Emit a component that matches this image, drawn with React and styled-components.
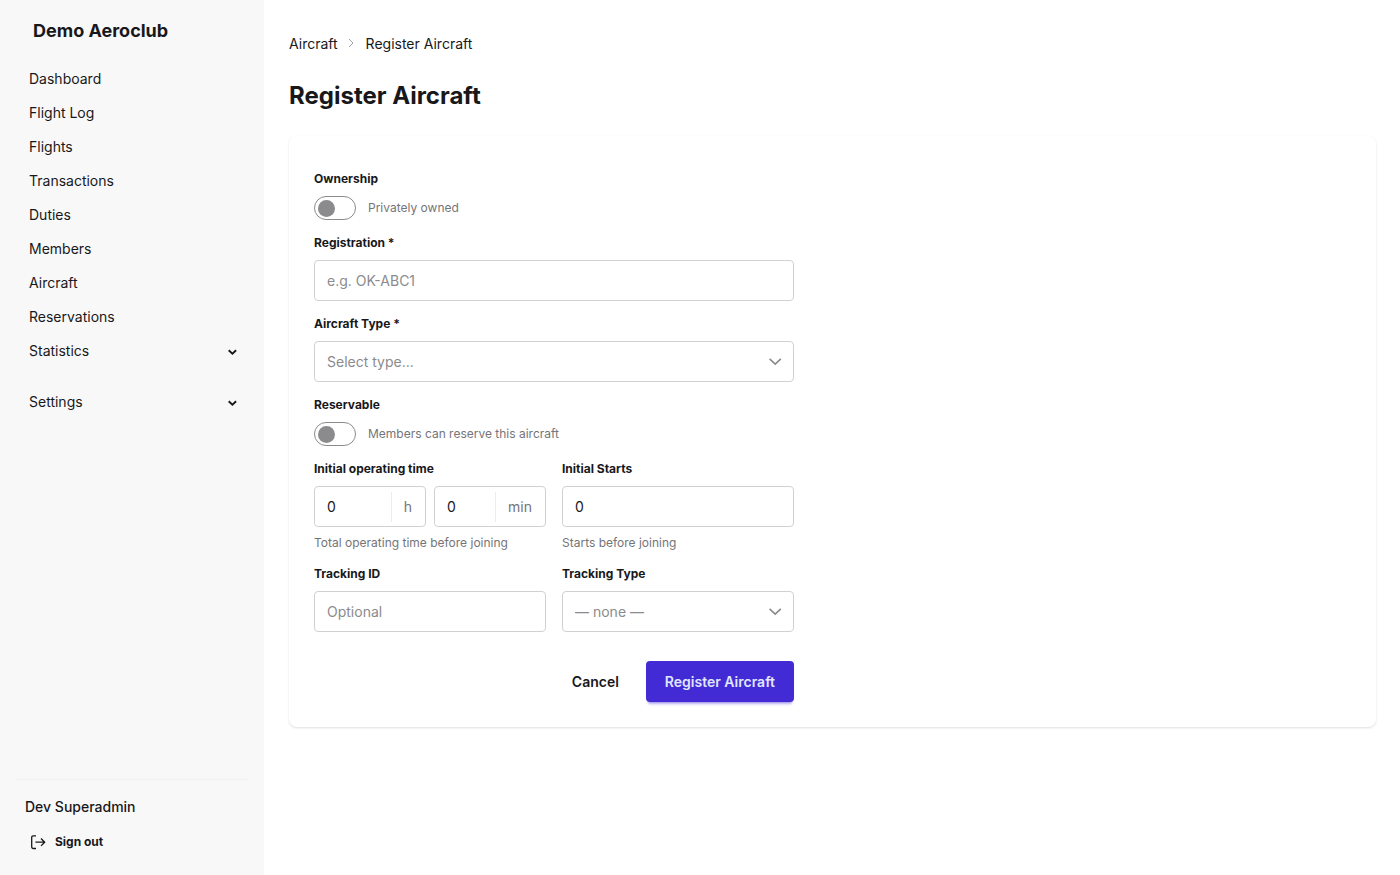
import React, { useState } from "react";
import styled, { createGlobalStyle } from "styled-components";

const GlobalStyle = createGlobalStyle`
  * {
    box-sizing: border-box;
  }

  body {
    margin: 0;
    background: #ffffff;
    color: #18181b;
    font-family: Inter, "Liberation Sans", sans-serif;
    font-size: 14px;
    line-height: 20px;
  }

  button, input, select {
    font: inherit;
    color: inherit;
  }
`;

const Page = styled.div`
  display: flex;
  min-height: 100vh;
`;

const Sidebar = styled.aside`
  display: flex;
  flex-direction: column;
  flex: none;
  width: 264px;
  padding: 17px 16px;
  background: #f8f8f8;
`;

const ClubName = styled.a`
  padding: 0 17px;
  color: inherit;
  font-size: 18px;
  font-weight: 700;
  line-height: 28px;
  text-decoration: none;
`;

const Nav = styled.nav`
  display: flex;
  flex-direction: column;
  flex: 1;
  margin-top: 17px;
`;

const NavLink = styled.a`
  padding: 7px 13px;
  color: inherit;
  text-decoration: none;
`;

const NavGroup = styled.button`
  display: flex;
  align-items: center;
  justify-content: space-between;
  margin-bottom: 17px;
  padding: 7px 10px 7px 13px;
  border: 0;
  background: none;
  text-align: left;
  cursor: pointer;
`;

const UserBox = styled.div`
  display: flex;
  flex-direction: column;
  align-items: flex-start;
  gap: 9px;
  padding: 17px 9px 0;
  border-top: 1px solid #f0f0f0;
`;

const UserName = styled.div`
  font-weight: 500;
`;

const SignOut = styled.button`
  display: flex;
  align-items: center;
  gap: 8px;
  padding: 6px 5px;
  border: 0;
  background: none;
  font-size: 12px;
  font-weight: 700;
  cursor: pointer;
`;

const Main = styled.main`
  flex: 1;
  min-width: 0;
  padding: 34px 24px 24px 25px;
`;

const Breadcrumbs = styled.nav`
  display: flex;
  align-items: center;
  gap: 8px;
`;

const Crumb = styled.a`
  color: inherit;
  text-decoration: none;
`;

const Title = styled.h1`
  margin: 26px 0 24px;
  font-size: 24px;
  font-weight: 700;
  line-height: 32px;
`;

const Card = styled.section`
  padding: 34px 25px 25px;
  border-radius: 8px;
  background: #ffffff;
  box-shadow: 0 1px 3px rgba(0, 0, 0, 0.08), 0 1px 2px rgba(0, 0, 0, 0.06);
`;

const Form = styled.form`
  display: flex;
  flex-direction: column;
  gap: 14px;
  max-width: 480px;
`;

const Columns = styled.div`
  display: grid;
  grid-template-columns: 1fr 1fr;
  gap: 16px;
`;

const FieldBox = styled.div`
  display: flex;
  flex-direction: column;
  gap: 8px;
  min-width: 0;
`;

const Label = styled.label`
  font-size: 12px;
  font-weight: 700;
  line-height: 18px;
`;

const Hint = styled.p`
  margin: 0;
  color: #757578;
  font-size: 12px;
  line-height: 16px;
`;

const ToggleRow = styled.div`
  display: flex;
  align-items: center;
  gap: 12px;
`;

const Toggle = styled.input`
  appearance: none;
  display: flex;
  align-items: center;
  width: 42px;
  height: 24px;
  margin: 0;
  padding: 0 3px;
  border: 1px solid #8b8b8d;
  border-radius: 12px;
  cursor: pointer;

  &::before {
    content: "";
    width: 17px;
    height: 17px;
    border-radius: 50%;
    background: #8b8b8d;
  }

  &:checked {
    justify-content: flex-end;
  }
`;

const TextInput = styled.input`
  width: 100%;
  height: 41px;
  padding: 0 12px;
  border: 1px solid #d1d1d1;
  border-radius: 4px;
  background: #ffffff;

  &::placeholder {
    color: #8b8b8d;
    opacity: 1;
  }
`;

const SelectBox = styled.div`
  display: grid;
  align-items: center;

  > * {
    grid-area: 1 / 1;
  }

  > svg {
    justify-self: end;
    margin-right: 12px;
    pointer-events: none;
  }
`;

const Select = styled.select`
  appearance: none;
  width: 100%;
  height: 41px;
  padding: 0 32px 0 12px;
  border: 1px solid #d1d1d1;
  border-radius: 4px;
  background: #ffffff;
  color: #8b8b8d;
`;

const TimeRow = styled.div`
  display: grid;
  grid-template-columns: 1fr 1fr;
  gap: 8px;
`;

const UnitBox = styled.div`
  display: flex;
  align-items: center;
  height: 41px;
  border: 1px solid #d1d1d1;
  border-radius: 4px;
`;

const UnitInput = styled.input`
  flex: 1;
  width: 0;
  padding: 0 0 0 12px;
  border: 0;
  background: none;
`;

const Unit = styled.span`
  padding: 5px 13px 5px 12px;
  border-left: 1px solid #ececec;
  color: #757578;
`;

const Actions = styled.div`
  display: flex;
  justify-content: flex-end;
  gap: 8px;
  margin-top: 15px;
`;

const Button = styled.button`
  height: 41px;
  padding: 0 19px;
  border: 0;
  border-radius: 4px;
  background: ${({ $primary }) => ($primary ? "#422ad5" : "transparent")};
  color: ${({ $primary }) => ($primary ? "#e0e7ff" : "inherit")};
  box-shadow: ${({ $primary }) =>
    $primary ? "0 3px 2px -2px rgba(66, 42, 213, 0.3), 0 4px 3px -2px rgba(66, 42, 213, 0.3)" : "none"};
  font-weight: 600;
  cursor: pointer;
`;

const links = [
  "Dashboard",
  "Flight Log",
  "Flights",
  "Transactions",
  "Duties",
  "Members",
  "Aircraft",
  "Reservations",
];

const groups = ["Statistics", "Settings"];

const GroupChevron = () => (
  <svg width="12" height="12" viewBox="0 0 12 12" fill="none" stroke="currentColor" strokeWidth="1.9">
    <path d="M2.7 5.2 6.4 8.6 10.1 5.2" />
  </svg>
);

const CrumbChevron = () => (
  <svg width="12" height="12" viewBox="0 0 12 12" fill="none" stroke="#a0a0a2" strokeWidth="1">
    <path d="M3 1 7 5 3 9" />
  </svg>
);

const SelectChevron = () => (
  <svg width="14" height="14" viewBox="0 0 14 14" fill="none" stroke="#8b8b8d" strokeWidth="1.6">
    <path d="M1.6 3.8 7.2 9.2 12.8 3.8" />
  </svg>
);

const SignOutIcon = () => (
  <svg width="17" height="16" viewBox="0 0 17 16" fill="none" stroke="currentColor" strokeWidth="1.3">
    <path d="M6 1.9H3.1Q1.7 1.9 1.7 3.3V13.1Q1.7 14.5 3.1 14.5H6" />
    <path d="M5.4 8.2H14.6M11 4.5 14.7 8.2 11 11.9" strokeLinejoin="round" />
  </svg>
);

const Field = ({ id, label, hint, children }) => (
  <FieldBox>
    <Label htmlFor={id}>{label}</Label>
    {children}
    {hint && <Hint>{hint}</Hint>}
  </FieldBox>
);

const RegisterForm = () => {
  const [hours, setHours] = useState("0");
  const [minutes, setMinutes] = useState("0");
  const [starts, setStarts] = useState("0");

  return (
    <Form onSubmit={(e) => e.preventDefault()}>
      <Field id="ownership" label="Ownership">
        <ToggleRow>
          <Toggle type="checkbox" id="ownership" />
          <Hint as="label" htmlFor="ownership">Privately owned</Hint>
        </ToggleRow>
      </Field>
      <Field id="registration" label="Registration *">
        <TextInput id="registration" placeholder="e.g. OK-ABC1" />
      </Field>
      <Field id="type" label="Aircraft Type *">
        <SelectBox>
          <Select id="type">
            <option>Select type...</option>
          </Select>
          <SelectChevron />
        </SelectBox>
      </Field>
      <Field id="reservable" label="Reservable">
        <ToggleRow>
          <Toggle type="checkbox" id="reservable" />
          <Hint as="label" htmlFor="reservable">Members can reserve this aircraft</Hint>
        </ToggleRow>
      </Field>
      <Columns>
        <Field id="hours" label="Initial operating time" hint="Total operating time before joining">
          <TimeRow>
            <UnitBox>
              <UnitInput id="hours" value={hours} onChange={(e) => setHours(e.target.value)} />
              <Unit>h</Unit>
            </UnitBox>
            <UnitBox>
              <UnitInput aria-label="Minutes" value={minutes} onChange={(e) => setMinutes(e.target.value)} />
              <Unit>min</Unit>
            </UnitBox>
          </TimeRow>
        </Field>
        <Field id="starts" label="Initial Starts" hint="Starts before joining">
          <TextInput id="starts" value={starts} onChange={(e) => setStarts(e.target.value)} />
        </Field>
      </Columns>
      <Columns>
        <Field id="trackingId" label="Tracking ID">
          <TextInput id="trackingId" placeholder="Optional" />
        </Field>
        <Field id="trackingType" label="Tracking Type">
          <SelectBox>
            <Select id="trackingType">
              <option>— none —</option>
            </Select>
            <SelectChevron />
          </SelectBox>
        </Field>
      </Columns>
      <Actions>
        <Button type="button">Cancel</Button>
        <Button type="submit" $primary>Register Aircraft</Button>
      </Actions>
    </Form>
  );
};

const App = () => {
  return (
    <Page>
      <GlobalStyle />
      <Sidebar>
        <ClubName href="#">Demo Aeroclub</ClubName>
        <Nav>
          {links.map((link) => (
            <NavLink key={link} href="#">{link}</NavLink>
          ))}
          {groups.map((group) => (
            <NavGroup key={group} type="button">
              {group}
              <GroupChevron />
            </NavGroup>
          ))}
        </Nav>
        <UserBox>
          <UserName>Dev Superadmin</UserName>
          <SignOut type="button">
            <SignOutIcon />
            Sign out
          </SignOut>
        </UserBox>
      </Sidebar>
      <Main>
        <Breadcrumbs aria-label="Breadcrumb">
          <Crumb href="#">Aircraft</Crumb>
          <CrumbChevron />
          <span>Register Aircraft</span>
        </Breadcrumbs>
        <Title>Register Aircraft</Title>
        <Card>
          <RegisterForm />
        </Card>
      </Main>
    </Page>
  );
};

export default App;
